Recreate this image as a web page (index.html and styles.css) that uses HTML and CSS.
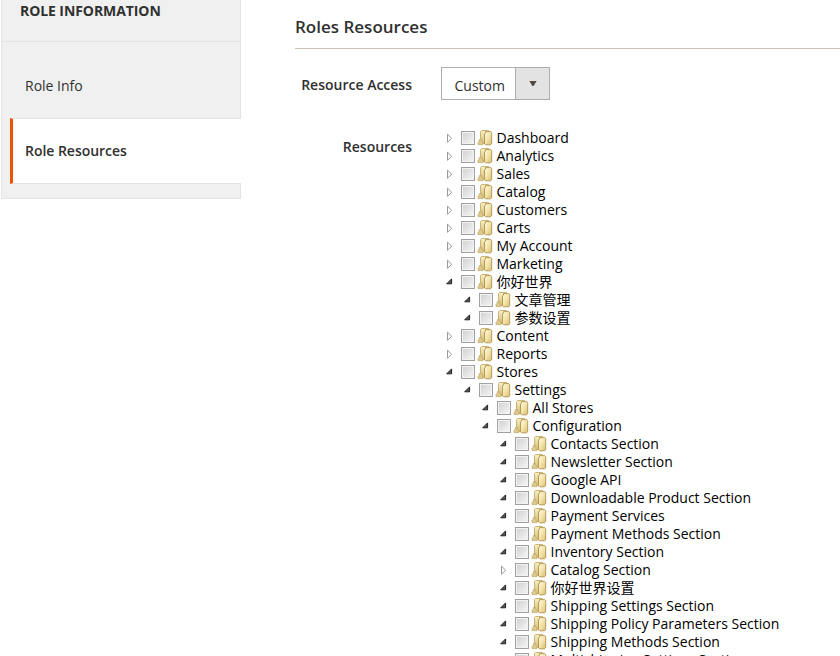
FILE: index.html
```html
<!DOCTYPE html>
<html lang="en">
<head>
<meta charset="utf-8">
<title>Roles Resources</title>
<link rel="stylesheet" href="styles.css">
</head>
<body>
<svg class="defs" aria-hidden="true">
  <defs>
    <linearGradient id="front" x1="0" y1="0" x2="1" y2="1"><stop offset="0" stop-color="#fffbe0"/><stop offset=".5" stop-color="#f3e4ac"/><stop offset="1" stop-color="#d8be72"/></linearGradient>
    <linearGradient id="back" x1="0" y1="0" x2="0" y2="1"><stop offset="0" stop-color="#faf0c4"/><stop offset="1" stop-color="#d3bb74"/></linearGradient>
    <symbol id="closed" viewBox="0 0 8 18"><path d="M2.5 5.2v8.1l4.2-4z" fill="#fff" stroke="#999" stroke-width="1"/></symbol>
    <symbol id="open" viewBox="0 0 8 18"><path d="M6.6 5.9v4.9H1.7z" fill="#555" stroke="#222" stroke-width="1"/></symbol>
    <symbol id="folder" viewBox="0 0 16 18">
      <path d="M3.5 2.5l1-1h7v13H3l.5-4z" fill="url(#back)" stroke="#c4ad6c" stroke-width=".9"/>
      <path d="M1 15.6v-2.2l1.3-1.4v-1.5h2.2V12l1.5 1.4v2.2z" fill="#dcc98e" stroke="#bfa663" stroke-width=".7"/>
      <path d="M7.5 5l1-1V2.6h5.3l.9 1v11.2l-1.2 1h-5l-1-1z" fill="url(#front)" stroke="#b0934c" stroke-width=".9"/>
    </symbol>
  </defs>
</svg>
<div class="page">
  <aside class="sidebar">
    <div class="side-title">ROLE INFORMATION</div>
    <nav class="side-nav">
      <div class="side-item">Role Info</div>
      <div class="side-item active">Role Resources</div>
    </nav>
  </aside>
  <main class="main">
    <h2 class="heading"><span>Roles Resources</span></h2>
    <div class="field access">
      <div class="label">Resource Access</div>
      <div class="select"><span class="value">Custom</span><span class="toggle"><svg width="8" height="5" viewBox="0 0 8 5"><path d="M.3 0h7.4L4.6 5H3.4z" fill="#514943"/></svg></span></div>
    </div>
    <div class="field">
      <div class="label tree-label">Resources</div>
      <div class="tree" id="tree"></div>
    </div>
  </main>
</div>
<script src="tree.js"></script>
</body>
</html>
```
FILE: styles.css
```css
* { box-sizing: border-box; }
html, body { margin: 0; height: 656px; overflow: hidden; background: #fff; }
body { font: 14px/18px "Open Sans", "Noto Sans CJK SC", sans-serif; color: #303030; }
.defs { display: block; width: 0; height: 0; }
.page { display: flex; height: 656px; overflow: hidden; }
.sidebar { width: 240px; height: 199px; margin-left: 1px; background: #f0f0f0; border: 1px solid #e3e3e3; border-top: 0; }
.side-title { height: 42px; padding: 2px 0 0 18px; border-bottom: 1px solid #e3e3e3; font-weight: 700; letter-spacing: -.08px; }
.side-nav { padding-top: 12px; margin: 0 -1px 0 8px; }
.side-item { height: 64px; padding-left: 15px; line-height: 64px; }
.side-item.active { height: 66px; padding-left: 12px; background: #fff; border: 1px solid #e3e3e3; border-left: 3px solid #eb5202; border-right: 0; font-weight: 600; letter-spacing: -.03px; }
.main { flex: 1; padding-left: 54px; }
.heading { height: 49px; margin: 0; padding-top: 15px; border-bottom: 1px solid #cac3b4; font-size: 17px; line-height: 24px; font-weight: 600; }
.field { display: flex; }
.access { height: 80px; padding-top: 18px; }
.label { width: 117px; margin-right: 29px; line-height: 36px; text-align: right; font-weight: 600; white-space: nowrap; }
.tree-label { line-height: 18px; padding-top: 9px; }
.select { display: flex; width: 109px; height: 33px; border: 1px solid #adadad; }
.value { width: 73px; padding-left: 12.5px; line-height: 35px; }
.toggle { flex: 1; display: flex; align-items: center; justify-content: center; background: #e3e3e3; border-left: 1px solid #adadad; }
.tree { color: #000; }
.children { padding-left: 18px; }
.row { display: flex; height: 18px; white-space: nowrap; padding-left: 4px; }
.arrow { width: 8px; height: 18px; }
.check { width: 14px; height: 14px; margin: 2px 2px 0 8px; border: 1px solid #a0a0a0; background: linear-gradient(135deg, #d0d0d0, #f6f6f6); box-shadow: inset 0 0 0 1px #f3f3f3; }
.folder { width: 16px; height: 18px; margin-right: 3.5px; }
```
FILE: tree.js
```js
const node = (name, open = false, children = []) => ({ name, open, children });
const sections = ['Contacts Section', 'Newsletter Section', 'Google API', 'Downloadable Product Section', 'Payment Services', 'Payment Methods Section', 'Inventory Section', 'Catalog Section', '你好世界设置', 'Shipping Settings Section', 'Shipping Policy Parameters Section', 'Shipping Methods Section', 'Multishipping Settings Section'];
const data = [
  ...['Dashboard', 'Analytics', 'Sales', 'Catalog', 'Customers', 'Carts', 'My Account', 'Marketing'].map(n => node(n)),
  node('你好世界', true, [node('文章管理', true), node('参数设置', true)]),
  node('Content'), node('Reports'),
  node('Stores', true, [node('Settings', true, [
    node('All Stores', true),
    node('Configuration', true, sections.map(n => node(n, n !== 'Catalog Section')))
  ])])
];
const render = nodes => nodes.map(n => `<div class="row"><svg class="arrow"><use href="#${n.open ? 'open' : 'closed'}"/></svg><span class="check"></span><svg class="folder"><use href="#folder"/></svg><span class="name">${n.name}</span></div>${n.children.length ? `<div class="children">${render(n.children)}</div>` : ''}`).join('');
document.getElementById('tree').innerHTML = render(data);
```
